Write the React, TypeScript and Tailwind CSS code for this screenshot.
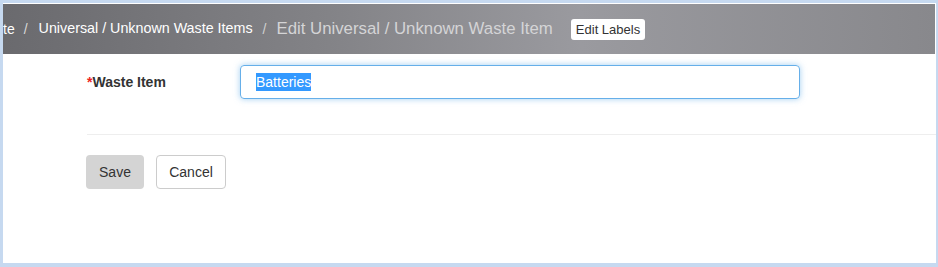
import React from "react";

export default function App() {
  return (
    <div
      className="w-[938px] h-[267px] bg-[#c6d9f0] pt-[3px] pl-[3px] pr-[2px] pb-[4px]"
      style={{ fontFamily: '"Liberation Sans", Arial, sans-serif' }}
    >
      <div className="w-full h-full bg-white flex flex-col">
        <div className="h-[51px] border-t border-white pr-[1px] bg-white">
          <div className="h-full bg-[linear-gradient(to_right,#6a6a6e_0%,#838387_35%,#9a9a9f_62%,#88888c_100%)] flex items-center overflow-hidden whitespace-nowrap">
            <span className="text-[14px] text-white">te</span>
            <span className="text-[14px] text-[#d8d8d8] ml-[9px]">/</span>
            <span className="text-[14.3px] text-white ml-[11px]">Universal / Unknown Waste Items</span>
            <span className="text-[14px] text-[#d0d0d0] ml-[10px]">/</span>
            <span className="text-[16.8px] text-[#d4d4d6] ml-[10px]">Edit Universal / Unknown Waste Item</span>
            <button className="ml-[18px] h-[21px] px-[5px] bg-white rounded-[3px] text-[13px] text-[#333] leading-none">
              Edit Labels
            </button>
          </div>
        </div>
        <div className="pl-[84px] pt-[11px] flex items-center">
          <label className="w-[153px] text-[14px] font-bold text-[#333]">
            <span className="text-[#e22]">*</span>Waste Item
          </label>
          <div className="w-[560px] h-[34px] rounded-[4px] border border-[#66afe9] shadow-[0_0_6px_rgba(102,175,233,0.6)] flex items-center pl-[15px]">
            <span className="bg-[#3399ff] text-white text-[14px] leading-[18px]">Batteries</span>
          </div>
        </div>
        <div className="ml-[84px] mt-[35px] border-t border-[#eee]" />
        <div className="pl-[83px] pt-[20px] flex gap-[12px]">
          <button className="w-[58px] h-[34px] bg-[#d4d4d4] rounded-[4px] text-[14px] text-[#333]">Save</button>
          <button className="w-[70px] h-[34px] bg-white border border-[#ccc] rounded-[4px] text-[14px] text-[#333]">Cancel</button>
        </div>
      </div>
    </div>
  );
}
